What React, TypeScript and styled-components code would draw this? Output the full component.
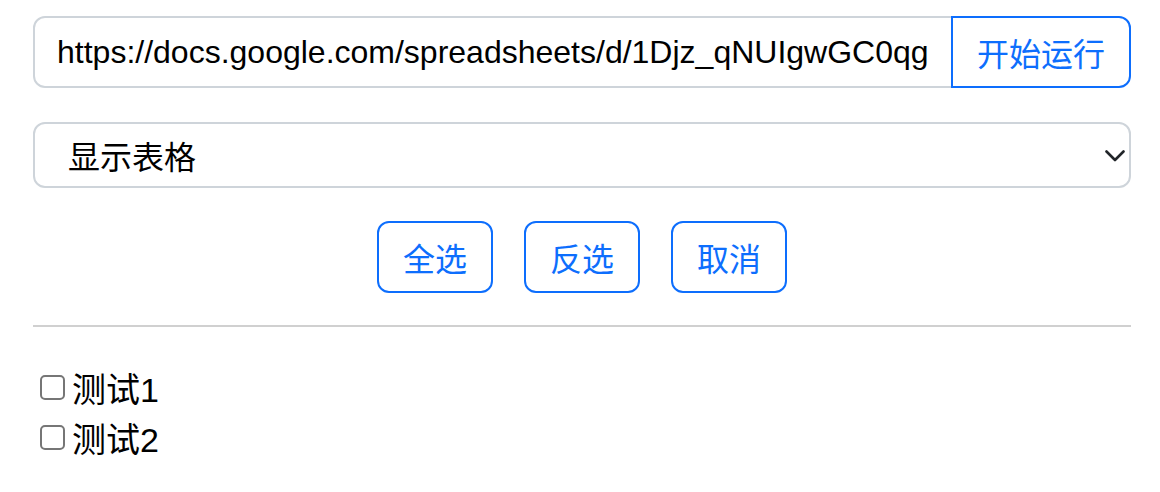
import React from "react";
import styled, { createGlobalStyle } from "styled-components";

const Global = createGlobalStyle`
  html, body { margin: 0; padding: 0; background: #fff; }
  body { font-family: "Liberation Sans", Arial, "Noto Sans CJK SC", sans-serif; color: #000; }
  * { box-sizing: border-box; }
`;

const Page = styled.div`
  padding: 16px 29px 0 33px;
  display: flex;
  flex-direction: column;
`;

const InputGroup = styled.div`
  display: flex;
  height: 72px;
`;

const UrlInput = styled.input`
  flex: 1;
  min-width: 0;
  height: 72px;
  padding: 0 23px 0 22px;
  border: 2px solid #ced4da;
  border-radius: 12px 0 0 12px;
  font-family: "Liberation Sans", Arial, sans-serif;
  font-size: 32px;
  color: #000;
  outline: none;
  background: #fff;
`;

const RunButton = styled.button`
  position: relative;
  z-index: 1;
  margin-left: -2px;
  height: 72px;
  padding: 0 24px;
  border: 2px solid #0d6efd;
  border-radius: 0 12px 12px 0;
  background: #fff;
  color: #0d6efd;
  font-family: "Noto Sans CJK SC", sans-serif;
  font-size: 32px;
  line-height: 1;
  white-space: nowrap;
`;

const SelectWrap = styled.div`
  position: relative;
  margin-top: 34px;
  height: 66px;
`;

const Select = styled.select`
  appearance: none;
  -webkit-appearance: none;
  width: 100%;
  height: 66px;
  padding: 0 60px 0 33px;
  border: 2px solid #ced4da;
  border-radius: 12px;
  background: #fff;
  font-family: "Noto Sans CJK SC", sans-serif;
  font-size: 32px;
  color: #000;
  outline: none;
`;

const Chevron = styled.svg`
  position: absolute;
  right: 6px;
  top: 28px;
  width: 20px;
  height: 12px;
  pointer-events: none;
`;

const ButtonRow = styled.div`
  display: flex;
  justify-content: center;
  gap: 31px;
  margin-top: 33px;
`;

const OutlineButton = styled.button`
  width: 116px;
  height: 72px;
  padding: 0;
  border: 2px solid #0d6efd;
  border-radius: 12px;
  background: #fff;
  color: #0d6efd;
  font-family: "Noto Sans CJK SC", sans-serif;
  font-size: 32px;
  line-height: 1;
`;

const Divider = styled.hr`
  margin: 32px 0 0;
  border: 0;
  border-top: 2px solid #d0d0d0;
`;

const List = styled.div`
  margin-top: 35px;
  display: flex;
  flex-direction: column;
`;

const Item = styled.label`
  display: flex;
  align-items: center;
  height: 50px;
  font-size: 34px;
  color: #000;
`;

const Check = styled.input`
  appearance: none;
  -webkit-appearance: none;
  width: 25px;
  height: 25px;
  margin: 0 7px 0 7px;
  border: 2px solid #767676;
  border-radius: 5px;
  background: #fff;
`;

const ItemText = styled.span`
  font-family: "Noto Sans CJK SC", sans-serif;
  & > b {
    font-weight: normal;
    font-family: "Liberation Sans", Arial, sans-serif;
  }
`;

export default function App() {
  return (
    <>
      <Global />
      <Page>
        <InputGroup>
          <UrlInput
            readOnly
            value="https://docs.google.com/spreadsheets/d/1Djz_qNUIgwGC0qgcXk2hP8LmZrT5vYbQe9WsA3dFjO/edit#gid=0"
          />
          <RunButton>开始运行</RunButton>
        </InputGroup>
        <SelectWrap>
          <Select defaultValue="show">
            <option value="show">显示表格</option>
          </Select>
          <Chevron viewBox="0 0 20 12">
            <path d="M1.5 1.5 L10 10 L18.5 1.5" fill="none" stroke="#212529" strokeWidth="2.6" strokeLinecap="round" strokeLinejoin="round" />
          </Chevron>
        </SelectWrap>
        <ButtonRow>
          <OutlineButton>全选</OutlineButton>
          <OutlineButton>反选</OutlineButton>
          <OutlineButton>取消</OutlineButton>
        </ButtonRow>
        <Divider />
        <List>
          <Item>
            <Check type="checkbox" />
            <ItemText>测试<b>1</b></ItemText>
          </Item>
          <Item>
            <Check type="checkbox" />
            <ItemText>测试<b>2</b></ItemText>
          </Item>
        </List>
      </Page>
    </>
  );
}
